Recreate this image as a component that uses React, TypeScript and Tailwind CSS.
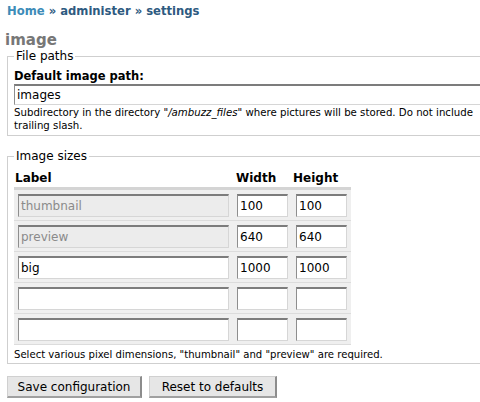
import React from "react";

const font = { fontFamily: '"DejaVu Sans", Verdana, sans-serif' };

type Row = { label: string; width: string; height: string; locked?: boolean };

const rows: Row[] = [
  { label: "thumbnail", width: "100", height: "100", locked: true },
  { label: "preview", width: "640", height: "640", locked: true },
  { label: "big", width: "1000", height: "1000" },
  { label: "", width: "", height: "" },
  { label: "", width: "", height: "" },
];

function TextBox({ value, disabled, className }: { value: string; disabled?: boolean; className: string }) {
  return (
    <div
      className={
        "border-t-2 border-l border-r border-b border-t-[#7c7c7c] border-l-[#8e8e8e] border-r-[#d6d6d6] border-b-[#d6d6d6] pl-[2px] text-[12px] " +
        (disabled ? "bg-[#ececec] text-[#8a8a8a] " : "bg-white text-black ") +
        className
      }
    >
      {value}
    </div>
  );
}

export default function App() {
  return (
    <div className="w-[480px] h-[402px] overflow-hidden bg-white text-black" style={font}>
      <div className="pl-[7px] pt-[3px]">
        <div className="text-[11.6px] font-bold leading-[16px]">
          <span className="text-[#3d8cb8]">Home</span>
          <span className="text-[#2e5a80]"> » administer » settings</span>
        </div>
        <h1 className="mt-[12px] -ml-[2px] text-[15px] font-bold leading-[18px] text-[#777]">image</h1>

        <fieldset className="w-[520px] border border-[#cfcfcf] px-[6px] pb-[3px]">
          <legend className="px-[2px] text-[12px] leading-[15px]">File paths</legend>
          <div className="mt-[4px] text-[11.5px] font-bold leading-[16px]">Default image path:</div>
          <TextBox value="images" className="h-[21px] w-full leading-[18px]" />
          <div className="mt-[1px] text-[10.2px] leading-[13px]">
            Subdirectory in the directory "<em>/ambuzz_files</em>" where pictures will be stored. Do not include
            <br />
            trailing slash.
          </div>
        </fieldset>

        <fieldset className="mt-[13px] w-[520px] border border-[#cfcfcf] px-[6px] pb-[2px]">
          <legend className="px-[2px] text-[12px] leading-[15px]">Image sizes</legend>
          <div className="mt-[4px] w-[337px]">
            <div className="flex h-[22px] items-center border-b-[3px] border-b-[#d4d4d4] text-[12px] font-bold">
              <div className="w-[219px] pl-[1px]">Label</div>
              <div className="w-[57px] pl-[3px]">Width</div>
              <div className="pl-[3px]">Height</div>
            </div>
            {rows.map((r, i) => (
              <div
                key={i}
                className="flex h-[31px] items-center gap-[8px] border-b border-b-[#dcdcdc] bg-[#efefef] pl-[4px]"
              >
                <TextBox value={r.label} disabled={r.locked} className="h-[23px] w-[211px] leading-[20px]" />
                <TextBox value={r.width} className="h-[23px] w-[51px] leading-[20px]" />
                <TextBox value={r.height} className="h-[23px] w-[51px] leading-[20px]" />
              </div>
            ))}
          </div>
          <div className="mt-[3px] text-[10.1px] leading-[13px]">
            Select various pixel dimensions, "thumbnail" and "preview" are required.
          </div>
        </fieldset>

        <div className="mt-[12px] flex gap-[7px]">
          <button className="h-[22px] w-[135px] border-t border-l border-r-2 border-b-2 border-t-[#d0d0d0] border-l-[#d0d0d0] border-r-[#8c8c8c] border-b-[#a0a0a0] bg-[#e6e6e6] text-[12px] leading-[18px]">
            Save configuration
          </button>
          <button className="h-[22px] w-[128px] border-t border-l border-r-2 border-b-2 border-t-[#d0d0d0] border-l-[#d0d0d0] border-r-[#8c8c8c] border-b-[#a0a0a0] bg-[#e6e6e6] text-[12px] leading-[18px]">
            Reset to defaults
          </button>
        </div>
      </div>
    </div>
  );
}
